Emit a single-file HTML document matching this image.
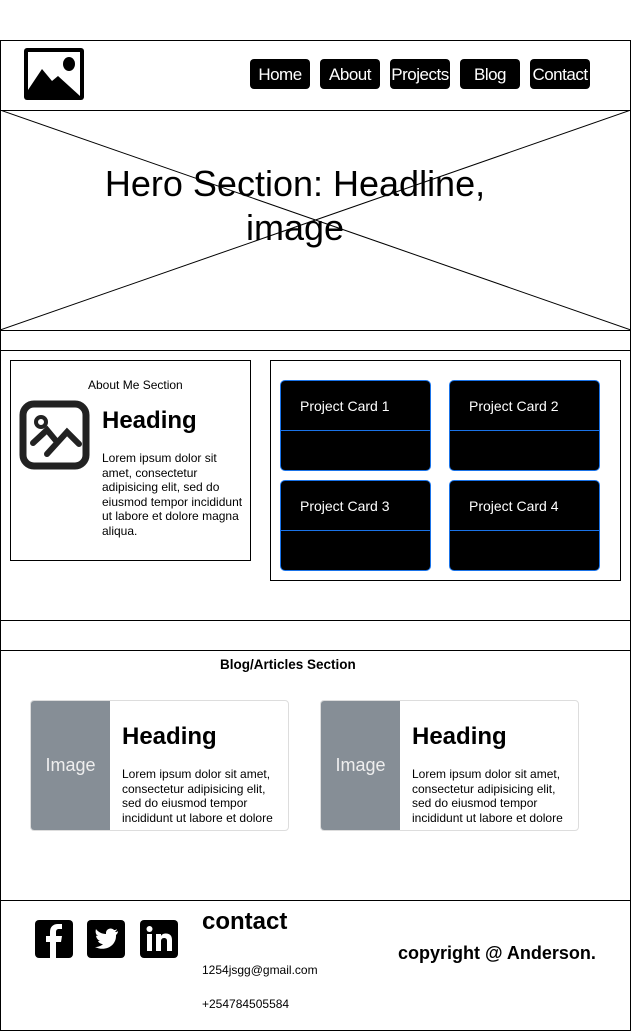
<!DOCTYPE html>
<html><head><style>
*{margin:0;padding:0;box-sizing:border-box}
body{width:631px;height:1031px;background:#fff;position:relative;font-family:"Liberation Sans",Arial,sans-serif;overflow:hidden}
.a{position:absolute}
.box{position:absolute;border:1px solid #000}
.nav{position:absolute;top:59px;height:30px;background:#000;color:#fff;border-radius:4px;font-size:17px;line-height:31px;text-align:center;letter-spacing:-0.5px}
.pc{position:absolute;width:151px;height:91px;background:#000;border:1px solid #1a73e8;border-radius:5px;color:#fff;font-size:14px}
.pc .t{position:absolute;left:19px;top:17px}
.pc .l{position:absolute;left:0;right:0;top:49px;border-top:1px solid #1a73e8}
.bc{position:absolute;top:700px;width:259px;height:131px;border:1px solid #ddd;border-radius:4px;overflow:hidden}
.bc .im{position:absolute;left:0;top:0;width:79px;height:100%;background:#868e96;color:#eee;font-size:18px;text-align:center;line-height:129px}
.bc h3{position:absolute;left:91px;top:22px;font-size:24px}
.bc p{position:absolute;left:91px;top:66px;font-size:12px;line-height:14.5px;width:165px}
</style></head><body>
<div class="box" style="left:0;top:40px;width:631px;height:991px"></div>
<div class="a" style="left:0;top:110px;width:631px;border-top:1px solid #000"></div>
<div class="a" style="left:0;top:330px;width:631px;border-top:1px solid #000"></div>
<div class="a" style="left:0;top:350px;width:631px;border-top:1px solid #000"></div>
<div class="a" style="left:0;top:620px;width:631px;border-top:1px solid #000"></div>
<div class="a" style="left:0;top:650px;width:631px;border-top:1px solid #000"></div>
<div class="a" style="left:0;top:900px;width:631px;border-top:1px solid #000"></div>
<svg class="a" style="left:0;top:110px" width="631" height="221"><line x1="0" y1="0" x2="631" y2="220" stroke="#000"/><line x1="631" y1="0" x2="0" y2="220" stroke="#000"/></svg>
<div class="a" style="left:80px;top:162px;width:430px;text-align:center;font-size:36px;line-height:44px">Hero Section: Headline, image</div>
<svg class="a" style="left:24px;top:48px" width="60" height="52"><rect x="0" y="0" width="60" height="52" rx="3" fill="#000"/><rect x="4" y="4" width="52" height="44" fill="#fff"/><path d="M4 48 L4 42 L18 21 L28 33 L34 28 L56 48 Z" fill="#000"/><ellipse cx="45" cy="16" rx="6" ry="7" fill="#000"/></svg>
<div class="nav" style="left:250px;width:60px">Home</div>
<div class="nav" style="left:320px;width:60px">About</div>
<div class="nav" style="left:390px;width:60px">Projects</div>
<div class="nav" style="left:460px;width:60px">Blog</div>
<div class="nav" style="left:530px;width:60px">Contact</div>
<div class="box" style="left:10px;top:360px;width:241px;height:201px"></div>
<div class="a" style="left:88px;top:378px;font-size:12px">About Me Section</div>
<svg class="a" style="left:19px;top:400px" width="72" height="70"><rect x="4" y="4" width="63" height="62" rx="11" fill="none" stroke="#222" stroke-width="7"/><circle cx="22" cy="22" r="5" fill="none" stroke="#222" stroke-width="4"/><path d="M14 43 L28 30 L38 42 M28 54 L48 32 L60 44" fill="none" stroke="#222" stroke-width="6" stroke-linecap="round"/></svg>
<div class="a" style="left:102px;top:407px;font-size:24px;font-weight:bold">Heading</div>
<div class="a" style="left:102px;top:451px;font-size:12px;line-height:14.5px;width:145px">Lorem ipsum dolor sit amet, consectetur adipisicing elit, sed do eiusmod tempor incididunt ut labore et dolore magna aliqua.</div>
<div class="box" style="left:270px;top:360px;width:351px;height:221px"></div>
<div class="pc" style="left:280px;top:380px"><div class="t">Project Card 1</div><div class="l"></div></div>
<div class="pc" style="left:449px;top:380px"><div class="t">Project Card 2</div><div class="l"></div></div>
<div class="pc" style="left:280px;top:480px"><div class="t">Project Card 3</div><div class="l"></div></div>
<div class="pc" style="left:449px;top:480px"><div class="t">Project Card 4</div><div class="l"></div></div>
<div class="a" style="left:220px;top:657px;font-size:13.5px;font-weight:bold">Blog/Articles Section</div>
<div class="bc" style="left:30px"><div class="im">Image</div><h3>Heading</h3><p>Lorem ipsum dolor sit amet, consectetur adipisicing elit, sed do eiusmod tempor incididunt ut labore et dolore</p></div>
<div class="bc" style="left:320px"><div class="im">Image</div><h3>Heading</h3><p>Lorem ipsum dolor sit amet, consectetur adipisicing elit, sed do eiusmod tempor incididunt ut labore et dolore</p></div>
<svg class="a" style="left:35px;top:920px" width="38" height="38"><rect width="38" height="38" rx="4" fill="#000"/><path d="M21 38 V22 H26 L27 16 H21 V12 C21 10 22 9 24 9 H27 V4 H23 C18 4 15 7 15 12 V16 H11 V22 H15 V38 Z" fill="#fff"/></svg>
<svg class="a" style="left:87px;top:920px" width="38" height="38"><rect width="38" height="38" rx="4" fill="#000"/><path d="M31 11 C30 12 29 12 28 12 C29 11 30 10 30 9 C29 10 28 10 27 10 C24 7 19 9 19 13 V14 C15 14 11 12 9 9 C8 12 9 15 11 16 C10 16 9 16 9 15 C9 18 11 20 13 21 C12 21 11 21 11 21 C12 23 14 24 16 24 C14 26 11 27 8 27 C18 32 29 26 29 16 V15 C30 14 31 13 31 11 Z" fill="#fff"/></svg>
<svg class="a" style="left:140px;top:920px" width="38" height="38"><rect width="38" height="38" rx="4" fill="#000"/><rect x="7" y="14" width="5" height="17" fill="#fff"/><circle cx="9.5" cy="9" r="3" fill="#fff"/><path d="M16 14 H21 V16 C22 14 24 13.5 26 13.5 C30 13.5 32 16 32 20 V31 H27 V21 C27 19 26 18 24 18 C22 18 21 19.5 21 21 V31 H16 Z" fill="#fff"/></svg>
<div class="a" style="left:202px;top:908px;font-size:24px;font-weight:bold">contact</div>
<div class="a" style="left:202px;top:963px;font-size:12px">1254jsgg@gmail.com</div>
<div class="a" style="left:202px;top:997px;font-size:12px">+254784505584</div>
<div class="a" style="left:398px;top:943px;font-size:18px;font-weight:bold">copyright @ Anderson.</div>
</body></html>
